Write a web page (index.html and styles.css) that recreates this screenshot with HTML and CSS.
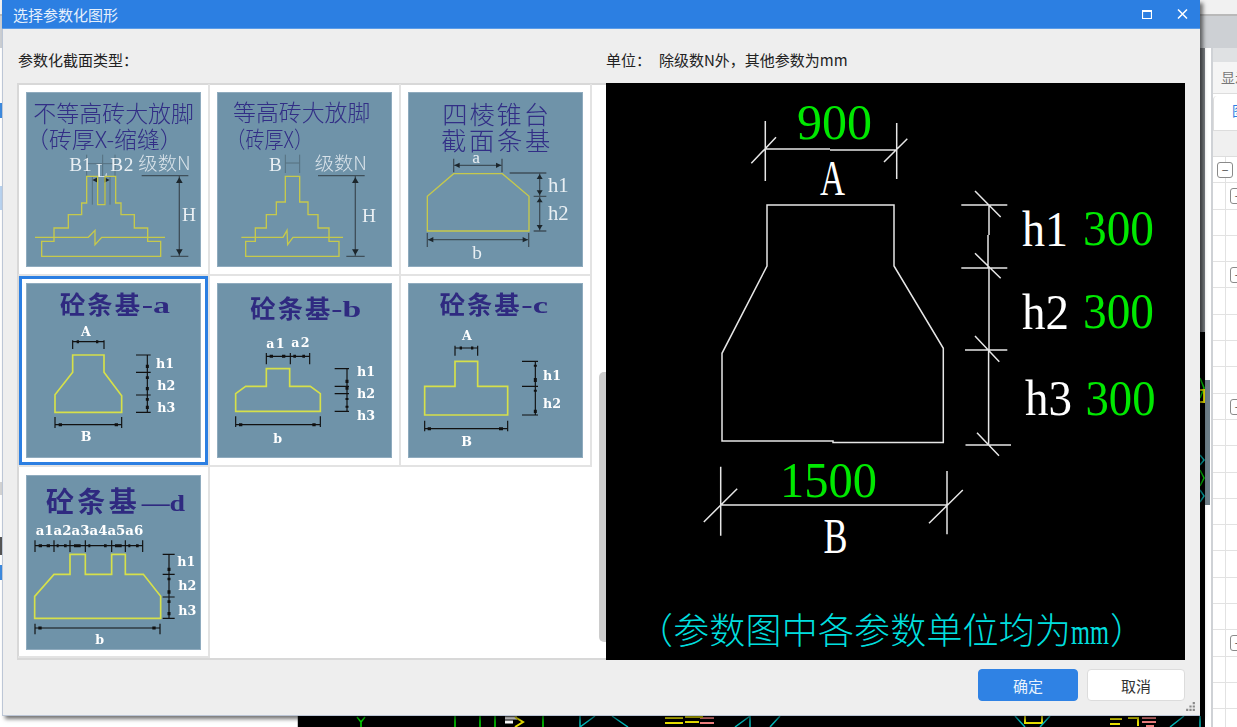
FILE: index.html
```html
<!DOCTYPE html>
<html lang="zh-CN">
<head>
    <meta charset="UTF-8">
    <title>选择参数化图形</title>
    <link rel="stylesheet" href="styles.css">
</head>
<body>
    <!-- application behind the dialog -->
    <div class="app">
        <div class="app-top"></div>
        <div class="app-main">
            <div class="left-pane"></div>
            <div class="cad">
                <svg class="cad-drawing" viewBox="298 48 907 679">
                    <path class="c-green" d="M357 717l4 5 4-5M361 722v5M455 716v11M480 716v11M495 716v11M543 716v11M1200 378l4 10-4 10M1200 470l4 8-4 8"/>
                    <path class="c-white" d="M505 718h12M505 722h8"/>
                    <path class="c-yellow" d="M515 717l8 5-8 5M1025 716v7h17v-7M1200 390h4v12h-4M1110 719h12M1110 724h10M1128 718h10v8"/>
                    <path class="c-pink" d="M1142 718h14M1142 722h14M1146 726h8M700 718h14M700 723h14"/>
                    <path class="c-yellow" d="M665 718h18M665 723h18M685 717h18M685 722h14"/>
                    <path class="c-cyan" d="M580 716v11M580 727l15-11M612 716l16 11M735 727l15-11M750 716v11M780 716l-10 11M1015 716l10 11M1050 716l-10 11M1170 727l14-11M1200 716v11M1200 455l4 5-4 5M1200 490l4 6-4 6"/>
                </svg>
            </div>
            <div class="splitter"><span class="splitter-handle"></span></div>
            <div class="tree">
                <div class="tree-strip"></div>
                <div class="tree-tabs">显示</div>
                <div class="tree-tab">图层</div>
                <div class="tree-head"></div>
                <div class="tree-row"><span class="toggle">−</span></div>
                <div class="tree-row sub"><span class="toggle">−</span></div>
                <div class="tree-row"></div>
                <div class="tree-row"></div>
                <div class="tree-row sub"><span class="toggle">−</span></div>
                <div class="tree-row"></div>
                <div class="tree-row"></div>
                <div class="tree-row"></div>
                <div class="tree-row"></div>
                <div class="tree-row sub"><span class="toggle">−</span></div>
                <div class="tree-row"></div>
                <div class="tree-row"></div>
                <div class="tree-row"></div>
                <div class="tree-row"></div>
                <div class="tree-row"></div>
                <div class="tree-row"></div>
                <div class="tree-row"></div>
                <div class="tree-row"></div>
                <div class="tree-row sub"><span class="toggle">−</span></div>
                <div class="tree-row"></div>
                <div class="tree-row"></div>
                <div class="tree-row"></div>
            </div>
        </div>
    </div>

    <div class="dialog">
        <div class="titlebar">
            <span class="title">选择参数化图形</span>
            <svg class="win-btn max-btn" viewBox="0 0 10 9"><path d="M.5 .5h9v8h-9zM.5 1.5h9"/></svg>
            <svg class="win-btn close-btn" viewBox="0 0 11 10"><path d="M1 .5l9 9M10 .5l-9 9"/></svg>
        </div>
        <div class="dialog-body">
            <div class="labels">
                <div class="label-type">参数化截面类型：</div>
                <div class="label-unit"><span class="unit-key">单位：</span>除级数N外，其他参数为mm</div>
            </div>
            <div class="content">
                <div class="shapes-panel">
                    <div class="shapes">
                        <!-- 不等高砖大放脚 -->
                        <div class="cell">
                            <svg class="thumb" viewBox="78 277 525 525">
                                <text class="tt" x="100" y="368" textLength="482" lengthAdjust="spacingAndGlyphs">不等高砖大放脚</text>
                                <text class="tt" x="78" y="445" textLength="470" lengthAdjust="spacingAndGlyphs">（砖厚X-缩缝）</text>
                                <path class="gr" d="M260 465v65M308 465v65M345 465v65M260 492h85M277 530v85M293 530v85M315 530v85M330 530v85"/>
                                <text class="lb" x="208" y="513" font-size="58" textLength="67">B1</text>
                                <text class="lb" x="331" y="513" font-size="58" textLength="69">B2</text>
                                <text class="lb" x="288" y="532" font-size="58">L</text>
                                <path class="ar" d="M277 541l16-8v16zM329 541l-16-8v16z"/>
                                <text class="lc" x="415" y="510" font-size="56" textLength="157" lengthAdjust="spacingAndGlyphs">级数N</text>
                                <path class="dk" d="M425 528h140M512 770h53M538 530v240"/>
                                <path class="ar" d="M538 533l-10 17h20zM538 766l-10-17h20z"/>
                                <text class="lb" x="546" y="665" font-size="58">H</text>
                                <path class="yl" d="M260 530h33v85h22v-85h32v80h16v35h40v40h40v40h39v45H125v-45h37v-40h43v-40h40v-35h15z"/>
                                <path class="yl" d="M105 713h160l20-21v43l20-22h190"/>
                            </svg>
                        </div>
                        <!-- 等高砖大放脚 -->
                        <div class="cell">
                            <svg class="thumb" viewBox="652 277 525 525">
                                <text class="tt" x="700" y="365" textLength="412" lengthAdjust="spacingAndGlyphs">等高砖大放脚</text>
                                <text class="tt" x="680" y="445" textLength="260" lengthAdjust="spacingAndGlyphs">（砖厚X）</text>
                                <text class="lb" x="808" y="513" font-size="58">B</text>
                                <path class="gr" d="M857 465v55M900 465v55M857 490h43"/>
                                <text class="lc" x="945" y="510" font-size="56" textLength="157" lengthAdjust="spacingAndGlyphs">级数N</text>
                                <path class="dk" d="M955 528h140M1040 770h55M1067 530v240"/>
                                <path class="ar" d="M1067 533l-10 17h20zM1067 766l-10-17h20z"/>
                                <text class="lb" x="1087" y="668" font-size="58">H</text>
                                <path class="yl" d="M857 530h43v77h25v38h30v40h33v40h30v45H738v-45h29v-40h33v-40h30v-38h27z"/>
                                <path class="yl" d="M725 713h125l12-21 2 43 16-22h150"/>
                            </svg>
                        </div>
                        <!-- 四棱锥台截面条基 -->
                        <div class="cell">
                            <svg class="thumb" viewBox="55 277 525 525">
                                <text class="tt tt-lg" x="158" y="374" textLength="320">四棱锥台</text>
                                <text class="tt tt-lg" x="154" y="450" textLength="328">截面条基</text>
                                <path class="dk" d="M192 477v41M337 477v41M192 497h145"/>
                                <path class="ar" d="M194 497l16-8v16zM335 497l-16-8v16z"/>
                                <text class="lb" x="248" y="490" font-size="52">a</text>
                                <path class="dk" d="M360 520h110M432 590h38M432 694h38M450 520v174"/>
                                <path class="ar" d="M450 524l-9 14h18zM450 586l-9-14h18zM450 594l-9 14h18zM450 690l-9-14h18z"/>
                                <text class="lb" x="475" y="577" font-size="62">h1</text>
                                <text class="lb" x="475" y="660" font-size="62">h2</text>
                                <path class="yl" d="M192 522h146l80 68v104H113V590z"/>
                                <path class="dk" d="M113 700v42M417 700v42M113 720h304"/>
                                <path class="ar" d="M115 720l16-8v16zM415 720l-16-8v16z"/>
                                <text class="lb" x="248" y="778" font-size="58">b</text>
                            </svg>
                        </div>
                        <!-- 砼条基-a -->
                        <div class="cell selected">
                            <svg class="thumb" viewBox="78 40 525 525">
                                <text class="tb" x="180" y="132" textLength="240">砼条基</text>
                                <text class="tl" x="425" y="130" textLength="85" lengthAdjust="spacingAndGlyphs">-a</text>
                                <text class="ls" x="243" y="200">A</text>
                                <path class="bk" d="M218 212v26M312 212v26M218 216h94M408 256h44M408 308h44M408 376h44M408 428h44M442 256v172M165 442v33M365 442v33M165 465h200"/>
                                <path class="dt" d="M230 216h7M288 216h7M442 285v10M442 320v8M442 352v10M442 385v8M442 408v10M176 465h10M344 465h10"/>
                                <text class="ls" x="468" y="295">h1</text>
                                <text class="ls" x="472" y="362">h2</text>
                                <text class="ls" x="472" y="428">h3</text>
                                <path class="yb" d="M218 256h94v52l53 70v50H165v-53l53-67z"/>
                                <text class="ls" x="242" y="515">B</text>
                            </svg>
                        </div>
                        <!-- 砼条基-b -->
                        <div class="cell">
                            <svg class="thumb" viewBox="652 40 525 525">
                                <text class="tb" x="752" y="145" textLength="240">砼条基</text>
                                <text class="tl" x="995" y="143" textLength="90" lengthAdjust="spacingAndGlyphs">-b</text>
                                <text class="ls" x="800" y="235" textLength="55">a1</text>
                                <text class="ls" x="875" y="232" textLength="55">a2</text>
                                <path class="bk" d="M800 250v34M872 250v34M930 250v34M800 260h130M1005 297h43M1005 350h43M1005 372h43M1005 425h43M1042 297v128M708 440v32M962 440v32M708 465h254"/>
                                <path class="dt" d="M810 260h10M847 260h10M881 260h8M908 260h8M1042 330v10M1042 350v10M1042 385v6M1042 408v6M718 465h10M938 465h10"/>
                                <text class="ls" x="1072" y="318">h1</text>
                                <text class="ls" x="1072" y="385">h2</text>
                                <text class="ls" x="1072" y="452">h3</text>
                                <path class="yb" d="M800 297h70v53h62l30 22v53H708v-53l30-22h62z"/>
                                <text class="ls" x="821" y="520">b</text>
                            </svg>
                        </div>
                        <!-- 砼条基-c -->
                        <div class="cell">
                            <svg class="thumb" viewBox="25 40 525 525">
                                <text class="tb" x="120" y="132" textLength="240">砼条基</text>
                                <text class="tl" x="365" y="130" textLength="80" lengthAdjust="spacingAndGlyphs">-c</text>
                                <text class="ls" x="187" y="212">A</text>
                                <path class="bk" d="M166 228v30M234 228v30M166 235h68M367 275h48M367 350h48M367 436h48M407 275v161M75 453v32M324 453v32M75 477h249"/>
                                <path class="dt" d="M180 235h7M214 235h7M407 285v6M407 325v12M407 360v6M407 420v10M84 477h10M298 477h12"/>
                                <text class="ls" x="430" y="330">h1</text>
                                <text class="ls" x="430" y="415">h2</text>
                                <path class="yb" d="M166 275h68v75h90v86H75v-86h91z"/>
                                <text class="ls" x="185" y="530">B</text>
                            </svg>
                        </div>
                        <!-- 砼条基-d -->
                        <div class="cell">
                            <svg class="thumb" viewBox="78 44 525 525">
                                <text class="tb tb-lg" x="138" y="155" textLength="272">砼条基</text>
                                <text class="tl" x="425" y="152" textLength="130" lengthAdjust="spacingAndGlyphs">—d</text>
                                <text class="ls" x="107" y="225" textLength="323" lengthAdjust="spacingAndGlyphs">a1a2a3a4a5a6</text>
                                <path class="bk" d="M105 240v35M162 240v35M210 240v35M256 240v35M335 240v35M376 240v35M428 240v35M105 256h323M488 282h36M488 342h36M488 410h36M488 474h36M507 282v192M105 490v32M480 490v32M105 503h375"/>
                                <path class="dt" d="M116 256h10M140 256h10M170 256h6M192 256h8M222 256h20M265 256h6M312 256h8M345 256h20M385 256h6M408 256h8M507 322v10M507 352v8M507 390v10M507 420v8M507 455v10M115 503h10M457 503h10"/>
                                <text class="ls" x="532" y="317">h1</text>
                                <text class="ls" x="535" y="390">h2</text>
                                <text class="ls" x="535" y="463">h3</text>
                                <path class="yb" d="M210 282h46v60h79v-60h41v60h54l52 66v66H104v-66l58-66h48z"/>
                                <text class="ls" x="286" y="550">b</text>
                            </svg>
                        </div>
                    </div>
                    <div class="scrollbar"><div class="scroll-thumb"></div></div>
                </div>
                <svg class="preview" viewBox="606 83 579 577">
                    <path class="ln" d="M765.3 121v60M896.7 123v56M765 149h65M830 150h66M751.3 163.3L776 137.3M884 162l23.3-23.3"/>
                    <path class="ln" d="M767 205h127v61l49.3 82.3v94.2H833v-1.5H722V353.300l45-87.300z"/>
                    <path class="ln" d="M961.300 205h46M961.300 268h46M965 350h42.300M965.500 445H1011M989 205v30M988 235v33M989 268v82M988.600 350v95M975 191l25.700 26M975 253.300l25.700 25M975 336l24.300 25.700M977 432.700l22 23"/>
                    <path class="ln" d="M720.700 466.700v69M947 471v63.300M721 505h226M703.800 522l33.400-33.300M929 523.300L962.800 490"/>
                    <text class="num" x="797" y="139">900</text>
                    <text class="dim" x="820" y="195" textLength="25" lengthAdjust="spacingAndGlyphs">A</text>
                    <text class="dim" x="1022" y="245.500" textLength="46" lengthAdjust="spacingAndGlyphs">h1</text>
                    <text class="num" x="1083" y="245" textLength="71" lengthAdjust="spacingAndGlyphs">300</text>
                    <text class="dim" x="1022" y="328.500" textLength="47" lengthAdjust="spacingAndGlyphs">h2</text>
                    <text class="num" x="1083" y="328" textLength="71" lengthAdjust="spacingAndGlyphs">300</text>
                    <text class="dim" x="1025" y="415" textLength="47" lengthAdjust="spacingAndGlyphs">h3</text>
                    <text class="num" x="1085.500" y="415" textLength="70" lengthAdjust="spacingAndGlyphs">300</text>
                    <text class="num" x="780" y="497" textLength="97" lengthAdjust="spacingAndGlyphs">1500</text>
                    <text class="dim" x="823.500" y="552.500" textLength="24" lengthAdjust="spacingAndGlyphs">B</text>
                    <text class="note" x="637" y="644" textLength="434">（参数图中各参数单位均为</text>
                    <text class="note-mm" x="1071" y="644" textLength="38" lengthAdjust="spacingAndGlyphs">mm</text>
                    <text class="note" x="1110" y="644">）</text>
                </svg>
            </div>
            <div class="actions">
                <button class="btn btn-primary">确定</button>
                <button class="btn">取消</button>
            </div>
            <svg class="grip" viewBox="0 0 10 10"><path d="M7 1h2v2H7zM4 4h2v2H4zM7 4h2v2H7zM1 7h2v2H1zM4 7h2v2H4zM7 7h2v2H7z"/></svg>
        </div>
    </div>
</body>
</html>
```

FILE: styles.css
```css
* {
    box-sizing: border-box;
}

body {
    margin: 0;
    width: 1237px;
    height: 727px;
    overflow: hidden;
    position: relative;
    background: #fff;
    font-family: "Noto Sans CJK SC", "Liberation Sans", sans-serif;
}

/* Application behind the dialog */
.app {
    width: 1237px;
    height: 727px;
    display: flex;
    flex-direction: column;
}

.app-top {
    height: 48px;
    background: linear-gradient(#f1f1f1 14px, #b9b9b9 14px, #b9b9b9 16px, #cdd0d4 16px);
}

.app-main {
    flex: 1;
    display: flex;
    min-height: 0;
}

.left-pane {
    width: 298px;
    border-right: 1px solid #c8c8c8;
    background:
        linear-gradient(#fff 55px, #3d8be0 55px, #3d8be0 70px, #fff 70px, #fff 138px, #b9d3f0 138px, #b9d3f0 162px, #fff 162px, #fff 434px, #d4d4d4 434px, #d4d4d4 447px, #fff 447px, #fff 489px, #555 489px, #555 507px, #fff 507px, #fff 517px, #3d8be0 517px, #3d8be0 532px, #fff 532px) no-repeat 0 0 / 3px 100%;
}

.cad {
    flex: 1;
    min-width: 0;
    background: linear-gradient(#808488 284px, #000 284px);
}

.cad-drawing {
    display: block;
    width: 100%;
    height: 100%;
    fill: none;
    stroke-width: 1.5;
}

.c-green { stroke: #00e000; }
.c-white { stroke: #fff; stroke-width: 3; }
.c-yellow { stroke: #e8e000; stroke-width: 2; }
.c-pink { stroke: #f08080; stroke-width: 2; }
.c-cyan { stroke: #00b8b8; }

.splitter {
    width: 8px;
    padding-top: 332px;
    background: #fff;
    border-right: 2px solid #cfd2d6;
}

.splitter-handle {
    display: block;
    width: 5px;
    height: 125px;
    background: #6d7e88;
}

.tree {
    width: 24px;
    overflow: hidden;
    background: #fff;
}

.tree-strip {
    height: 14px;
    background: #dfe1e3;
}

.tree-tabs {
    height: 32px;
    padding: 5px 0 0 8px;
    background: #f5f5f5;
    border-bottom: 1px solid #ddd;
    font-size: 14px;
    line-height: 20px;
    color: #777;
    white-space: nowrap;
}

.tree-tab {
    height: 34px;
    margin-top: 2px;
    padding: 4px 0 0 18px;
    border-left: 1px solid #ddd;
    border-radius: 4px 0 0 0;
    font-size: 14px;
    line-height: 20px;
    color: #2c7fe2;
    white-space: nowrap;
}

.tree-head {
    height: 27px;
    background: #f0f0f0;
    border-top: 1px solid #ddd;
    border-bottom: 1px solid #ddd;
}

.tree-row {
    height: 26.3px;
    padding: 5px 0 0 4px;
    border-bottom: 1px solid #e2e2e2;
    background: linear-gradient(#e2e2e2, #e2e2e2) no-repeat 12px 0 / 1px 100%;
}

.tree-row.sub {
    padding-left: 17px;
}

.toggle {
    display: block;
    width: 16px;
    height: 16px;
    border: 1px solid #8a8a8a;
    border-radius: 3px;
    background: #fff;
    font-size: 12px;
    line-height: 13px;
    text-align: center;
    color: #555;
}

/* Dialog */
.dialog {
    position: absolute;
    left: 2px;
    top: 0;
    width: 1198px;
    height: 716px;
    display: flex;
    flex-direction: column;
    background: #eeeeee;
    border-left: 1px solid #bcc6d6;
    border-bottom: 1px solid #bcc6d6;
    box-shadow: 3px 3px 4px rgba(0, 0, 0, 0.55);
}

.titlebar {
    height: 29px;
    flex: none;
    display: flex;
    align-items: center;
    margin-left: -1px;
    padding: 0 12px 0 11px;
    background: #2c7fe2;
    border-bottom: 1px solid #5b9ce8;
}

.title {
    flex: 1;
    font-size: 15px;
    color: #e6f0fc;
}

.win-btn {
    fill: none;
    stroke: #fff;
}

.max-btn {
    width: 10px;
    height: 9px;
    margin-right: 25px;
    stroke-width: 1.2;
}

.close-btn {
    width: 11px;
    height: 10px;
    stroke-width: 1.5;
}

.dialog-body {
    flex: 1;
    position: relative;
    padding: 21px 15px 0 14px;
}

.labels {
    display: flex;
    height: 33px;
    font-size: 15px;
    line-height: 20px;
    color: #222;
}

.label-type {
    width: 589px;
    padding-left: 1px;
}

.unit-key {
    display: inline-block;
    width: 53px;
}

.content {
    display: flex;
    height: 577px;
}

.shapes-panel {
    width: 589px;
    display: flex;
    background: #fff;
    border-left: 2px solid #d8d8d8;
    border-top: 2px solid #d8d8d8;
    border-bottom: 2px solid #d8d8d8;
}

.shapes {
    width: 574px;
    margin: -1px 0 0 -1px;
    display: grid;
    grid-template-columns: repeat(3, 191px);
    grid-auto-rows: 191px;
}

/* cells are a pixel bigger than their track so the lines sit on the next cell */
.cell {
    width: 192px;
    height: 192px;
    padding: 8px;
    border-right: 2px solid #e3e3e3;
    border-bottom: 2px solid #e3e3e3;
}

.cell:nth-child(7) {
    padding-top: 9px;
}

.cell.selected {
    position: relative;
}

.cell.selected .thumb {
    outline: 3px solid #2c7fe2;
    outline-offset: 4px;
}

/* Thumbnails, drawn in a 525 unit square */
.thumb {
    display: block;
    width: 175px;
    height: 175px;
    background: #6f93a9;
    box-shadow: inset 0 0 0 1px #8fabbe;
    fill: none;
    font-family: "Liberation Serif", "Noto Sans CJK SC", serif;
}

.thumb text,
.thumb path {
    filter: blur(1px);
}

.tt {
    fill: #322e86;
    font-size: 68px;
    font-family: "Noto Sans CJK SC", "Liberation Serif", serif;
    font-weight: 300;
}

.tt-lg {
    font-size: 76px;
}

.tb {
    fill: #2f2a80;
    font-size: 76px;
    font-weight: 700;
    font-family: "Noto Sans CJK SC", serif;
}

.tb-lg {
    font-size: 84px;
}

.tl {
    fill: #2f2a80;
    font-size: 72px;
    font-weight: 700;
    font-family: "Liberation Serif", serif;
}

.lb {
    fill: #e9eff3;
}

.lc {
    fill: #d9e3ea;
    font-family: "Noto Sans CJK SC", "Liberation Serif", serif;
    font-weight: 300;
}

.ls {
    fill: #fff;
    font-size: 38px;
    font-weight: 700;
    font-family: "DejaVu Serif", serif;
}

.yl {
    stroke: #c6c94c;
    stroke-width: 4;
}

.yb {
    stroke: #d6e04a;
    stroke-width: 5;
}

.dk {
    stroke: #3f4f5a;
    stroke-width: 4;
}

.gr {
    stroke: #56707f;
    stroke-width: 3;
}

.ar {
    fill: #1c262c;
}

.bk {
    stroke: #111;
    stroke-width: 3.5;
}

.dt {
    stroke: #111;
    stroke-width: 9;
}

.scrollbar {
    flex: 1;
    padding: 287px 0 0 8px;
}

.scroll-thumb {
    width: 9px;
    height: 270px;
    border-radius: 5px 0 0 5px;
    background: #cdcdcd;
}

/* Parameter drawing */
.preview {
    display: block;
    width: 579px;
    height: 577px;
    background: #000;
    fill: none;
    font-family: "Liberation Serif", serif;
}

.ln {
    stroke: #e6e6e6;
    stroke-width: 1.5;
}

.num {
    fill: #00e800;
    font-size: 50px;
}

.dim {
    fill: #fff;
    font-size: 50px;
}

.note {
    fill: #00dede;
    font-size: 36px;
    font-family: "Noto Sans CJK SC", "Liberation Serif", serif;
    font-weight: 300;
}

.note-mm {
    fill: #00dede;
    font-size: 36px;
}

.actions {
    display: flex;
    justify-content: flex-end;
    gap: 9px;
    padding: 9px 0 0;
}

.btn {
    width: 98px;
    height: 32px;
    padding: 0;
    border: 1px solid #dcdcdc;
    border-radius: 4px;
    background: #fff;
    font-family: inherit;
    font-size: 15px;
    color: #333;
}

.btn-primary {
    width: 100px;
    border-color: #2f82e4;
    background: #2f82e4;
    color: #e8f2fd;
}

.grip {
    position: absolute;
    right: 4px;
    bottom: 3px;
    width: 11px;
    height: 11px;
    fill: #8a8a8a;
}
```
